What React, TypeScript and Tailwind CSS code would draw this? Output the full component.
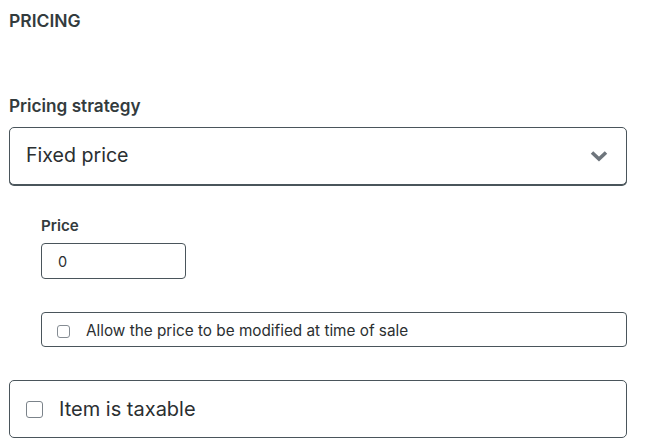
import React, { useState } from 'react';

const FONT = "font-['Inter','Noto_Sans',sans-serif]";

export default function App() {
    const [strategy, setStrategy] = useState('fixed');
    const [price, setPrice] = useState('0');
    const [modifiable, setModifiable] = useState(false);
    const [taxable, setTaxable] = useState(false);

    return (
        <div className={`${FONT} bg-white text-[#333b3d] w-[645px] h-[445px] pl-[9px] pr-[18px] pt-[11px]`}>
            <h2 className="text-[17.5px] leading-[20px] font-semibold">PRICING</h2>

            <label className="block mt-[64px] text-[17.2px] leading-[22px] font-semibold">Pricing strategy</label>
            <div className="relative mt-[10px]">
                <select
                    value={strategy}
                    onChange={(e) => setStrategy(e.target.value)}
                    className="appearance-none w-full h-[58px] pl-[16px] pr-10 text-[19.6px] text-[#2b2f31] bg-white border border-[#4a555b] rounded-[5px] shadow-[0_1px_0_#4a555b] outline-none"
                >
                    <option value="fixed">Fixed price</option>
                    <option value="variable">Variable price</option>
                </select>
                <svg className="absolute right-[19px] top-[23px] pointer-events-none" width="18" height="12" viewBox="0 0 18 12">
                    <path d="M2 2.5 L9 9 L16 2.5" fill="none" stroke="#6e757c" strokeWidth="3.6" strokeLinecap="butt" />
                </svg>
            </div>

            <div className="pl-[32px]">
                <label className="block mt-[31px] text-[15.2px] leading-[20px] font-semibold">Price</label>
                <input
                    value={price}
                    onChange={(e) => setPrice(e.target.value)}
                    className="block mt-[7px] w-[145px] h-[36px] px-[16px] text-[14.5px] text-[#2b2f31] border border-[#4a555b] rounded-[4px] outline-none"
                />

                <label className="mt-[33px] flex items-center h-[35px] border border-[#4a555b] rounded-[4px] pl-[15px] pt-[3px] cursor-pointer">
                    <input
                        type="checkbox"
                        checked={modifiable}
                        onChange={(e) => setModifiable(e.target.checked)}
                        className="appearance-none w-[13px] h-[13px] border border-[#858c93] rounded-[3px] bg-white"
                    />
                    <span className="ml-[16px] text-[15.3px] text-[#2b2f31]">Allow the price to be modified at time of sale</span>
                </label>
            </div>

            <label className="mt-[33px] flex items-center h-[58px] border border-[#4a555b] rounded-[5px] pl-[16px] cursor-pointer">
                <input
                    type="checkbox"
                    checked={taxable}
                    onChange={(e) => setTaxable(e.target.checked)}
                    className="appearance-none w-[17px] h-[17px] border-[1.5px] border-[#7b838a] rounded-[3px] bg-white"
                />
                <span className="ml-[16px] text-[20px] text-[#2b2f31]">Item is taxable</span>
            </label>
        </div>
    );
}
